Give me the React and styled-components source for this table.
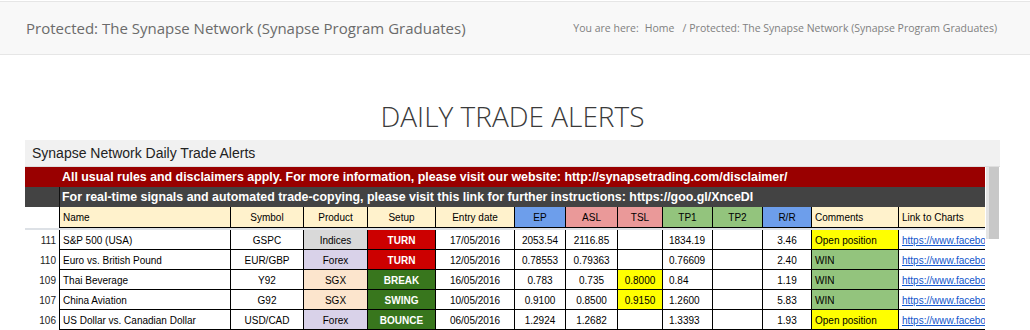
import React from "react";
import styled, { createGlobalStyle } from "styled-components";

const GlobalStyle = createGlobalStyle`
  html, body {
    margin: 0;
    padding: 0;
    background: #fff;
    overflow: hidden;
  }
  body {
    font-family: "Open Sans", "Liberation Sans", sans-serif;
  }
`;

const COLUMNS =
  "34px 171px 73px 64px 68px 79px 51px 52px 45px 50px 50px 49px 87px 87px";

const headers = [
  { label: "Name", align: "left" },
  { label: "Symbol" },
  { label: "Product" },
  { label: "Setup" },
  { label: "Entry date" },
  { label: "EP", bg: "#6d9eeb" },
  { label: "ASL", bg: "#ea9999" },
  { label: "TSL", bg: "#ea9999" },
  { label: "TP1", bg: "#93c47d" },
  { label: "TP2", bg: "#93c47d" },
  { label: "R/R", bg: "#6d9eeb" },
  { label: "Comments", align: "left" },
  { label: "Link to Charts", align: "left" },
];

const productColors = {
  Indices: "#d9d9d9",
  Forex: "#d9d2e9",
  SGX: "#fce5cd",
};

const setupColors = {
  TURN: "#cc0000",
  BREAK: "#38761d",
  SWING: "#38761d",
  BOUNCE: "#38761d",
};

const commentColors = {
  "Open position": "#ffff00",
  WIN: "#93c47d",
};

const LINK = "https://www.facebook.com/synapsetrading/";

const trades = [
  { no: 111, name: "S&P 500 (USA)", symbol: "GSPC", product: "Indices", setup: "TURN", date: "17/05/2016", ep: "2053.54", asl: "2116.85", tsl: "", tp1: "1834.19", tp2: "", rr: "3.46", comment: "Open position" },
  { no: 110, name: "Euro vs. British Pound", symbol: "EUR/GBP", product: "Forex", setup: "TURN", date: "12/05/2016", ep: "0.78553", asl: "0.79363", tsl: "", tp1: "0.76609", tp2: "", rr: "2.40", comment: "WIN" },
  { no: 109, name: "Thai Beverage", symbol: "Y92", product: "SGX", setup: "BREAK", date: "16/05/2016", ep: "0.783", asl: "0.735", tsl: "0.8000", tp1: "0.84", tp2: "", rr: "1.19", comment: "WIN" },
  { no: 107, name: "China Aviation", symbol: "G92", product: "SGX", setup: "SWING", date: "10/05/2016", ep: "0.9100", asl: "0.8500", tsl: "0.9150", tp1: "1.2600", tp2: "", rr: "5.83", comment: "WIN" },
  { no: 106, name: "US Dollar vs. Canadian Dollar", symbol: "USD/CAD", product: "Forex", setup: "BOUNCE", date: "06/05/2016", ep: "1.2924", asl: "1.2682", tsl: "", tp1: "1.3393", tp2: "", rr: "1.93", comment: "Open position" },
  { no: 105, name: "", symbol: "", product: "", setup: "TURN", date: "", ep: "", asl: "", tsl: "", tp1: "", tp2: "", rr: "", comment: "" },
];

export default function App() {
  return (
    <>
      <GlobalStyle />
      <PageHeader>
        <PageTitle>Protected: The Synapse Network (Synapse Program Graduates)</PageTitle>
        <Breadcrumbs>
          <span>You are here:</span>
          <Crumb href="#">Home</Crumb>
          <Sep>/</Sep>
          <span>Protected: The Synapse Network (Synapse Program Graduates)</span>
        </Breadcrumbs>
      </PageHeader>

      <Main>
        <Heading>DAILY TRADE ALERTS</Heading>

        <Sheet>
          <SheetTitle>Synapse Network Daily Trade Alerts</SheetTitle>
          <SheetBody>
            <Grid>
              <BannerRow $bg="#990000">
                <BannerGutter />
                <BannerText>
                  All usual rules and disclaimers apply. For more information, please visit our website: http://synapsetrading.com/disclaimer/
                </BannerText>
              </BannerRow>
              <BannerRow $bg="#434343">
                <BannerGutter />
                <BannerText $divider>
                  For real-time signals and automated trade-copying, please visit this link for further instructions: https://goo.gl/XnceDI
                </BannerText>
              </BannerRow>

              <Row $height={21}>
                <RowNum />
                {headers.map((h) => (
                  <Cell key={h.label} $bg={h.bg || "#fff2cc"} $align={h.align}>
                    {h.label}
                  </Cell>
                ))}
              </Row>

              <FreezeBar />

              {trades.map((t) => (
                <Row key={t.no} $height={20}>
                  <RowNum>{t.no}</RowNum>
                  <Cell $align="left">{t.name}</Cell>
                  <Cell>{t.symbol}</Cell>
                  <Cell $bg={productColors[t.product]}>{t.product}</Cell>
                  <Cell $bg={setupColors[t.setup]} $color="#fff" $bold>
                    {t.setup}
                  </Cell>
                  <Cell>{t.date}</Cell>
                  <Cell>{t.ep}</Cell>
                  <Cell>{t.asl}</Cell>
                  <Cell $bg={t.tsl ? "#ffff00" : undefined}>{t.tsl}</Cell>
                  <Cell $align="left" $pad={6}>{t.tp1}</Cell>
                  <Cell>{t.tp2}</Cell>
                  <Cell>{t.rr}</Cell>
                  <Cell $align="left" $bg={commentColors[t.comment]}>
                    {t.comment}
                  </Cell>
                  <Cell $align="left">
                    {t.name && <SheetLink href={LINK}>{LINK}</SheetLink>}
                  </Cell>
                </Row>
              ))}
            </Grid>
            <Scrollbar>
              <Thumb />
            </Scrollbar>
          </SheetBody>
        </Sheet>
      </Main>
    </>
  );
}

const PageHeader = styled.header`
  box-sizing: border-box;
  margin-top: 1px;
  height: 54px;
  display: flex;
  align-items: center;
  justify-content: space-between;
  padding: 0 33px 0 26px;
  background: #f8f8f8;
  border-top: 1px solid #e6e6e6;
  border-bottom: 1px solid #e6e6e6;
`;

const PageTitle = styled.h1`
  margin: 0;
  font-family: "Open Sans", sans-serif;
  font-size: 15px;
  font-weight: 400;
  color: #6b6b6b;
`;

const Breadcrumbs = styled.nav`
  display: flex;
  align-items: center;
  font-family: "Open Sans", sans-serif;
  font-size: 10.5px;
  color: #808080;
`;

const Crumb = styled.a`
  margin-left: 6px;
  color: #808080;
  text-decoration: none;
`;

const Sep = styled.span`
  margin: 0 3px 0 8px;
`;

const Main = styled.main`
  padding: 42px 0 0 25px;
`;

const Heading = styled.h2`
  margin: 0 0 5px;
  width: 975px;
  text-align: center;
  font-family: "Open Sans", sans-serif;
  font-size: 28px;
  font-weight: 300;
  line-height: 38px;
  color: #3a3a3a;
`;

const Sheet = styled.section`
  width: 975px;
  font-family: "Liberation Sans", Arial, sans-serif;
`;

const SheetTitle = styled.div`
  height: 26px;
  line-height: 27px;
  padding-left: 7px;
  font-size: 14px;
  color: #222;
  background: #f1f1f1;
  border-bottom: 1px solid #dedede;
`;

const SheetBody = styled.div`
  display: flex;
  align-items: flex-start;
`;

const Grid = styled.div`
  width: 960px;
  font-size: 10px;
`;

const BannerRow = styled.div`
  display: grid;
  grid-template-columns: 34px 1fr;
  height: 20px;
  background: ${(p) => p.$bg};
`;

const BannerGutter = styled.div``;

const BannerText = styled.div`
  box-sizing: border-box;
  padding-left: 2px;
  border-left: 1px solid ${(p) => (p.$divider ? "#111" : "transparent")};
  line-height: 20px;
  font-size: 12.4px;
  font-weight: 700;
  color: #fff;
  white-space: nowrap;
  overflow: hidden;
`;

const Row = styled.div`
  display: grid;
  grid-template-columns: ${COLUMNS};
  height: ${(p) => p.$height}px;
`;

const RowNum = styled.div`
  padding: 1px 3px 0 0;
  text-align: right;
  line-height: 19px;
  color: #222;
`;

const Cell = styled.div`
  box-sizing: border-box;
  border-left: 1px solid #000;
  border-bottom: 1px solid #000;
  padding: 1px ${(p) => p.$pad ?? 3}px 0;
  background: ${(p) => p.$bg || "#fff"};
  color: ${(p) => p.$color || "#000"};
  font-weight: ${(p) => (p.$bold ? 700 : 400)};
  text-align: ${(p) => p.$align || "center"};
  line-height: 19px;
  white-space: nowrap;
  overflow: hidden;
`;

const FreezeBar = styled.div`
  height: 2px;
  background: #dde1e6;
`;

const SheetLink = styled.a`
  color: #1155cc;
  text-decoration: underline;
`;

const Scrollbar = styled.div`
  width: 15px;
  display: flex;
  justify-content: flex-end;
`;

const Thumb = styled.div`
  width: 10px;
  height: 72px;
  background: #c8c8c8;
  border-left: 3px solid #e4e4e4;
  margin-right: 1px;
`;
